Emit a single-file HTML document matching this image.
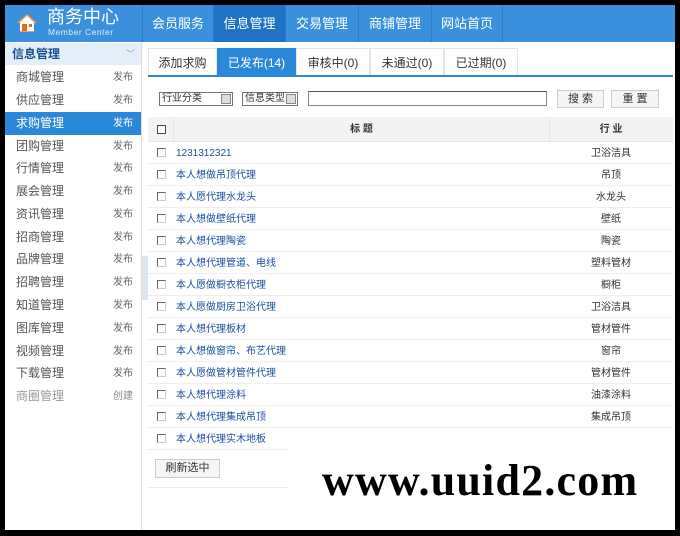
<!DOCTYPE html><html><head><meta charset="utf-8"><style>
*{margin:0;padding:0;box-sizing:border-box}
body{width:680px;height:536px;background:#000;position:relative;overflow:hidden;font-family:"Liberation Sans","Noto Sans CJK SC",sans-serif;font-size:11px;color:#333}
.a{position:absolute}
#wrap{left:5px;top:5px;width:670px;height:525px;background:#fff}
#hdr{left:5px;top:5px;width:670px;height:37px;background:#3a90dc}
.nav{top:5px;height:37px;line-height:37px;color:#fff;font-size:13px;text-align:center;border-left:1px solid #2c7cc6}
#side{left:5px;top:42px;width:137px;height:488px;background:#fff;border-right:1px solid #ddd}
.si{left:5px;width:136px;height:23px;line-height:23px;font-size:12px;color:#555}
.si b{font-weight:normal;position:absolute;left:11px}
.si i{font-style:normal;position:absolute;right:8px;font-size:10px;color:#666}
.tab{top:48px;height:28px;line-height:28px;text-align:center;font-size:12px;color:#333;border:1px solid #e5e5e5;border-bottom:none;background:#fff}
.row{left:148px;width:525px;height:22px;border-bottom:1px solid #eee}
.cb{position:absolute;left:9px;top:6px;width:9px;height:9px;border:1px solid #666;border-right-color:#ccc;border-bottom-color:#ccc;background:#fff}
.t{position:absolute;left:28px;top:1px;line-height:22px;color:#1d4fa0;font-size:10px}
.ind{position:absolute;left:401px;top:1px;width:124px;text-align:center;line-height:22px;font-size:10px;color:#333}
.btn{height:18px;line-height:16px;border:1px solid #ccc;background:#f5f5f5;text-align:center;font-size:11px;color:#333}
</style></head><body>
<div id="wrap" class="a"></div>
<div id="hdr" class="a"></div>
<svg class="a" style="left:16px;top:13px" width="22" height="20" viewBox="0 0 22 20"><path d="M11 1L1 10h3v9h14v-9h3z" fill="#f6a24a"/><path d="M11 3L4 9.5V18h14V9.5z" fill="#fff"/><rect x="6" y="11" width="5" height="7" fill="#e06a1a"/><rect x="13" y="11" width="3" height="3" fill="#e06a1a"/></svg>
<div class="a" style="left:47px;top:7px;color:#fff;font-size:18px;line-height:20px">商务中心</div>
<div class="a" style="left:48px;top:28px;color:#dce9f8;font-size:8.5px;line-height:9px;letter-spacing:0.5px">Member Center</div>
<div class="a nav" style="left:142px;width:71px;background:#3a90dc">会员服务</div>
<div class="a nav" style="left:213px;width:72px;background:#1f72c4">信息管理</div>
<div class="a nav" style="left:285px;width:73px">交易管理</div>
<div class="a nav" style="left:358px;width:73px">商铺管理</div>
<div class="a nav" style="left:431px;width:72px;border-right:1px solid #2c7cc6">网站首页</div>
<div id="side" class="a"></div>
<div class="a" style="left:5px;top:43px;width:136px;height:22px;background:#e3eef9;line-height:22px;font-size:12px;font-weight:bold;color:#1a4f8f;padding-left:7px">信息管理<span style="position:absolute;right:6px;color:#999;font-weight:normal;font-size:9px">﹀</span></div>
<div class="a si" style="top:66px"><b>商城管理</b><i>发布</i></div>
<div class="a si" style="top:89px"><b>供应管理</b><i>发布</i></div>
<div class="a si" style="top:112px;background:#2b88d8;color:#fff"><b>求购管理</b><i style="color:#fff">发布</i></div>
<div class="a si" style="top:135px"><b>团购管理</b><i>发布</i></div>
<div class="a si" style="top:157px"><b>行情管理</b><i>发布</i></div>
<div class="a si" style="top:180px"><b>展会管理</b><i>发布</i></div>
<div class="a si" style="top:203px"><b>资讯管理</b><i>发布</i></div>
<div class="a si" style="top:226px"><b>招商管理</b><i>发布</i></div>
<div class="a si" style="top:248px"><b>品牌管理</b><i>发布</i></div>
<div class="a si" style="top:271px"><b>招聘管理</b><i>发布</i></div>
<div class="a si" style="top:294px"><b>知道管理</b><i>发布</i></div>
<div class="a si" style="top:317px"><b>图库管理</b><i>发布</i></div>
<div class="a si" style="top:340px"><b>视频管理</b><i>发布</i></div>
<div class="a si" style="top:362px"><b>下载管理</b><i>发布</i></div>
<div class="a si" style="top:385px;color:#999"><b>商圈管理</b><i style="color:#888">创建</i></div>
<div class="a" style="left:142px;top:256px;width:6px;height:44px;background:#dde6ee"></div>
<div class="a tab" style="left:148px;width:69px">添加求购</div>
<div class="a tab" style="left:217px;width:79px;background:#2b88d8;color:#fff;border-color:#2b88d8">已发布(14)</div>
<div class="a tab" style="left:296px;width:74px">审核中(0)</div>
<div class="a tab" style="left:370px;width:74px">未通过(0)</div>
<div class="a tab" style="left:444px;width:74px">已过期(0)</div>
<div class="a" style="left:148px;top:75px;width:525px;height:2px;background:#2b88d8"></div>
<div class="a" style="left:159px;top:92px;width:74px;height:14px;border:1px solid #777;font-size:10px;line-height:12px;padding-left:2px">行业分类<span style="position:absolute;right:1px;top:1px;width:10px;height:10px;background:#ddd;border:1px solid #888"></span></div>
<div class="a" style="left:242px;top:92px;width:56px;height:14px;border:1px solid #777;font-size:10px;line-height:12px;padding-left:2px">信息类型<span style="position:absolute;right:1px;top:1px;width:10px;height:10px;background:#ddd;border:1px solid #888"></span></div>
<div class="a" style="left:308px;top:91px;width:239px;height:15px;border:1px solid #888;border-top-color:#555"></div>
<div class="a btn" style="left:557px;top:90px;width:47px">搜 索</div>
<div class="a btn" style="left:611px;top:90px;width:48px">重 置</div>
<div class="a" style="left:148px;top:117px;width:525px;height:25px;background:#f3f3f3;border-bottom:1px solid #e5e5e5">
<span class="cb" style="top:8px;border-color:#444"></span>
<span style="position:absolute;left:25px;top:0;width:1px;height:25px;background:#e5e5e5"></span>
<span style="position:absolute;left:26px;width:375px;text-align:center;line-height:25px;font-size:10px;font-weight:bold">标 题</span>
<span style="position:absolute;left:401px;top:0;width:1px;height:25px;background:#e5e5e5"></span>
<span style="position:absolute;left:401px;width:124px;text-align:center;line-height:25px;font-size:10px;font-weight:bold">行 业</span></div>
<div class="a row" style="top:142px"><span class="cb"></span><span class="t">1231312321</span><span class="ind">卫浴洁具</span></div>
<div class="a row" style="top:164px"><span class="cb"></span><span class="t">本人想做吊顶代理</span><span class="ind">吊顶</span></div>
<div class="a row" style="top:186px"><span class="cb"></span><span class="t">本人愿代理水龙头</span><span class="ind">水龙头</span></div>
<div class="a row" style="top:208px"><span class="cb"></span><span class="t">本人想做壁纸代理</span><span class="ind">壁纸</span></div>
<div class="a row" style="top:230px"><span class="cb"></span><span class="t">本人想代理陶瓷</span><span class="ind">陶瓷</span></div>
<div class="a row" style="top:252px"><span class="cb"></span><span class="t">本人想代理管道、电线</span><span class="ind">塑料管材</span></div>
<div class="a row" style="top:274px"><span class="cb"></span><span class="t">本人愿做橱衣柜代理</span><span class="ind">橱柜</span></div>
<div class="a row" style="top:296px"><span class="cb"></span><span class="t">本人愿做厨房卫浴代理</span><span class="ind">卫浴洁具</span></div>
<div class="a row" style="top:318px"><span class="cb"></span><span class="t">本人想代理板材</span><span class="ind">管材管件</span></div>
<div class="a row" style="top:340px"><span class="cb"></span><span class="t">本人想做窗帘、布艺代理</span><span class="ind">窗帘</span></div>
<div class="a row" style="top:362px"><span class="cb"></span><span class="t">本人愿做管材管件代理</span><span class="ind">管材管件</span></div>
<div class="a row" style="top:384px"><span class="cb"></span><span class="t">本人想代理涂料</span><span class="ind">油漆涂料</span></div>
<div class="a row" style="top:406px"><span class="cb"></span><span class="t">本人想代理集成吊顶</span><span class="ind">集成吊顶</span></div>
<div class="a row" style="top:428px;width:140px"><span class="cb"></span><span class="t">本人想代理实木地板</span></div>
<div class="a btn" style="left:155px;top:459px;width:65px;height:19px;line-height:17px">刷新选中</div>
<div class="a" style="left:148px;top:487px;width:140px;height:1px;background:#eee"></div>
<div class="a" style="left:322px;top:458px;font-family:'Liberation Serif',serif;font-weight:bold;font-size:44px;line-height:46px;color:#000;letter-spacing:1.2px">www.uuid2.com</div>
</body></html>
